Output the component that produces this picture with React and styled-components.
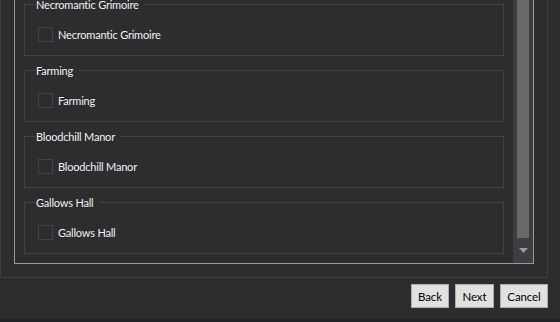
import React from "react";
import styled, { createGlobalStyle } from "styled-components";

const GlobalStyle = createGlobalStyle`
  html, body {
    margin: 0;
    padding: 0;
    background: #2d2d30;
    font-family: Lato, "Noto Sans", sans-serif;
    font-size: 11px;
    letter-spacing: -0.2px;
  }
`;

const Screen = styled.div`
  width: 560px;
  height: 322px;
  display: flex;
  flex-direction: column;
  overflow: hidden;
`;

const OuterPanel = styled.div`
  width: 548px;
  height: 278px;
  box-sizing: border-box;
  border: 1px solid #3f3f42;
  border-top: none;
  padding: 0 13px 13px 13px;
  display: flex;
`;

const ListFrame = styled.div`
  flex: 1;
  display: flex;
  border: 1px solid #9a9a9a;
  border-top: none;
`;

const GroupList = styled.div`
  flex: 1;
  display: flex;
  flex-direction: column;
  justify-content: flex-end;
  gap: 14px;
  padding: 0 9px 9px 9px;
`;

const Group = styled.div`
  position: relative;
  height: 52px;
  box-sizing: border-box;
  border: 1px solid #434346;
  padding: 22px 0 0 13px;
`;

const GroupTitle = styled.span`
  position: absolute;
  top: -8px;
  left: 10px;
  padding: 0 6px 0 1px;
  background: #2d2d30;
  color: #f1f1f1;
  line-height: 16px;
`;

const Row = styled.label`
  display: flex;
  align-items: center;
  gap: 5px;
  color: #f1f1f1;
`;

const Check = styled.span`
  width: 15px;
  height: 15px;
  box-sizing: border-box;
  border: 1px solid #434346;
`;

const ScrollBar = styled.div`
  width: 20px;
  background: #3e3e42;
  display: flex;
  flex-direction: column;
  align-items: center;
`;

const Thumb = styled.div`
  width: 12px;
  height: 238px;
  background: #686868;
`;

const ArrowBox = styled.div`
  flex: 1;
  display: flex;
  align-items: center;
  justify-content: center;
`;

const ButtonRow = styled.div`
  width: 548px;
  display: flex;
  justify-content: flex-end;
  gap: 6px;
  margin-top: 6px;
`;

const Button = styled.button`
  height: 24px;
  width: ${(p) => p.w}px;
  box-sizing: border-box;
  padding: 0;
  border: 1px solid #adadad;
  background: #e1e1e1;
  color: #000;
  font-family: Lato, "Noto Sans", sans-serif;
  font-size: 11.5px;
  letter-spacing: -0.1px;
`;

const Spacer = styled.div`
  flex: 1;
`;

const TaskStrip = styled.div`
  height: 3px;
  background: #1e2428;
`;

const groups = ["Necromantic Grimoire", "Farming", "Bloodchill Manor", "Gallows Hall"];

export default function App() {
  return (
    <Screen>
      <GlobalStyle />
      <OuterPanel>
        <ListFrame>
          <GroupList>
            {groups.map((g) => (
              <Group key={g}>
                <GroupTitle>{g}</GroupTitle>
                <Row>
                  <Check />
                  {g}
                </Row>
              </Group>
            ))}
          </GroupList>
          <ScrollBar>
            <Thumb />
            <ArrowBox>
              <svg width="9" height="5" viewBox="0 0 9 5">
                <path d="M0 0 H9 L4.5 5 Z" fill="#9a9a9a" />
              </svg>
            </ArrowBox>
          </ScrollBar>
        </ListFrame>
      </OuterPanel>
      <ButtonRow>
        <Button w={38}>Back</Button>
        <Button w={39}>Next</Button>
        <Button w={48}>Cancel</Button>
      </ButtonRow>
      <Spacer />
      <TaskStrip />
    </Screen>
  );
}
